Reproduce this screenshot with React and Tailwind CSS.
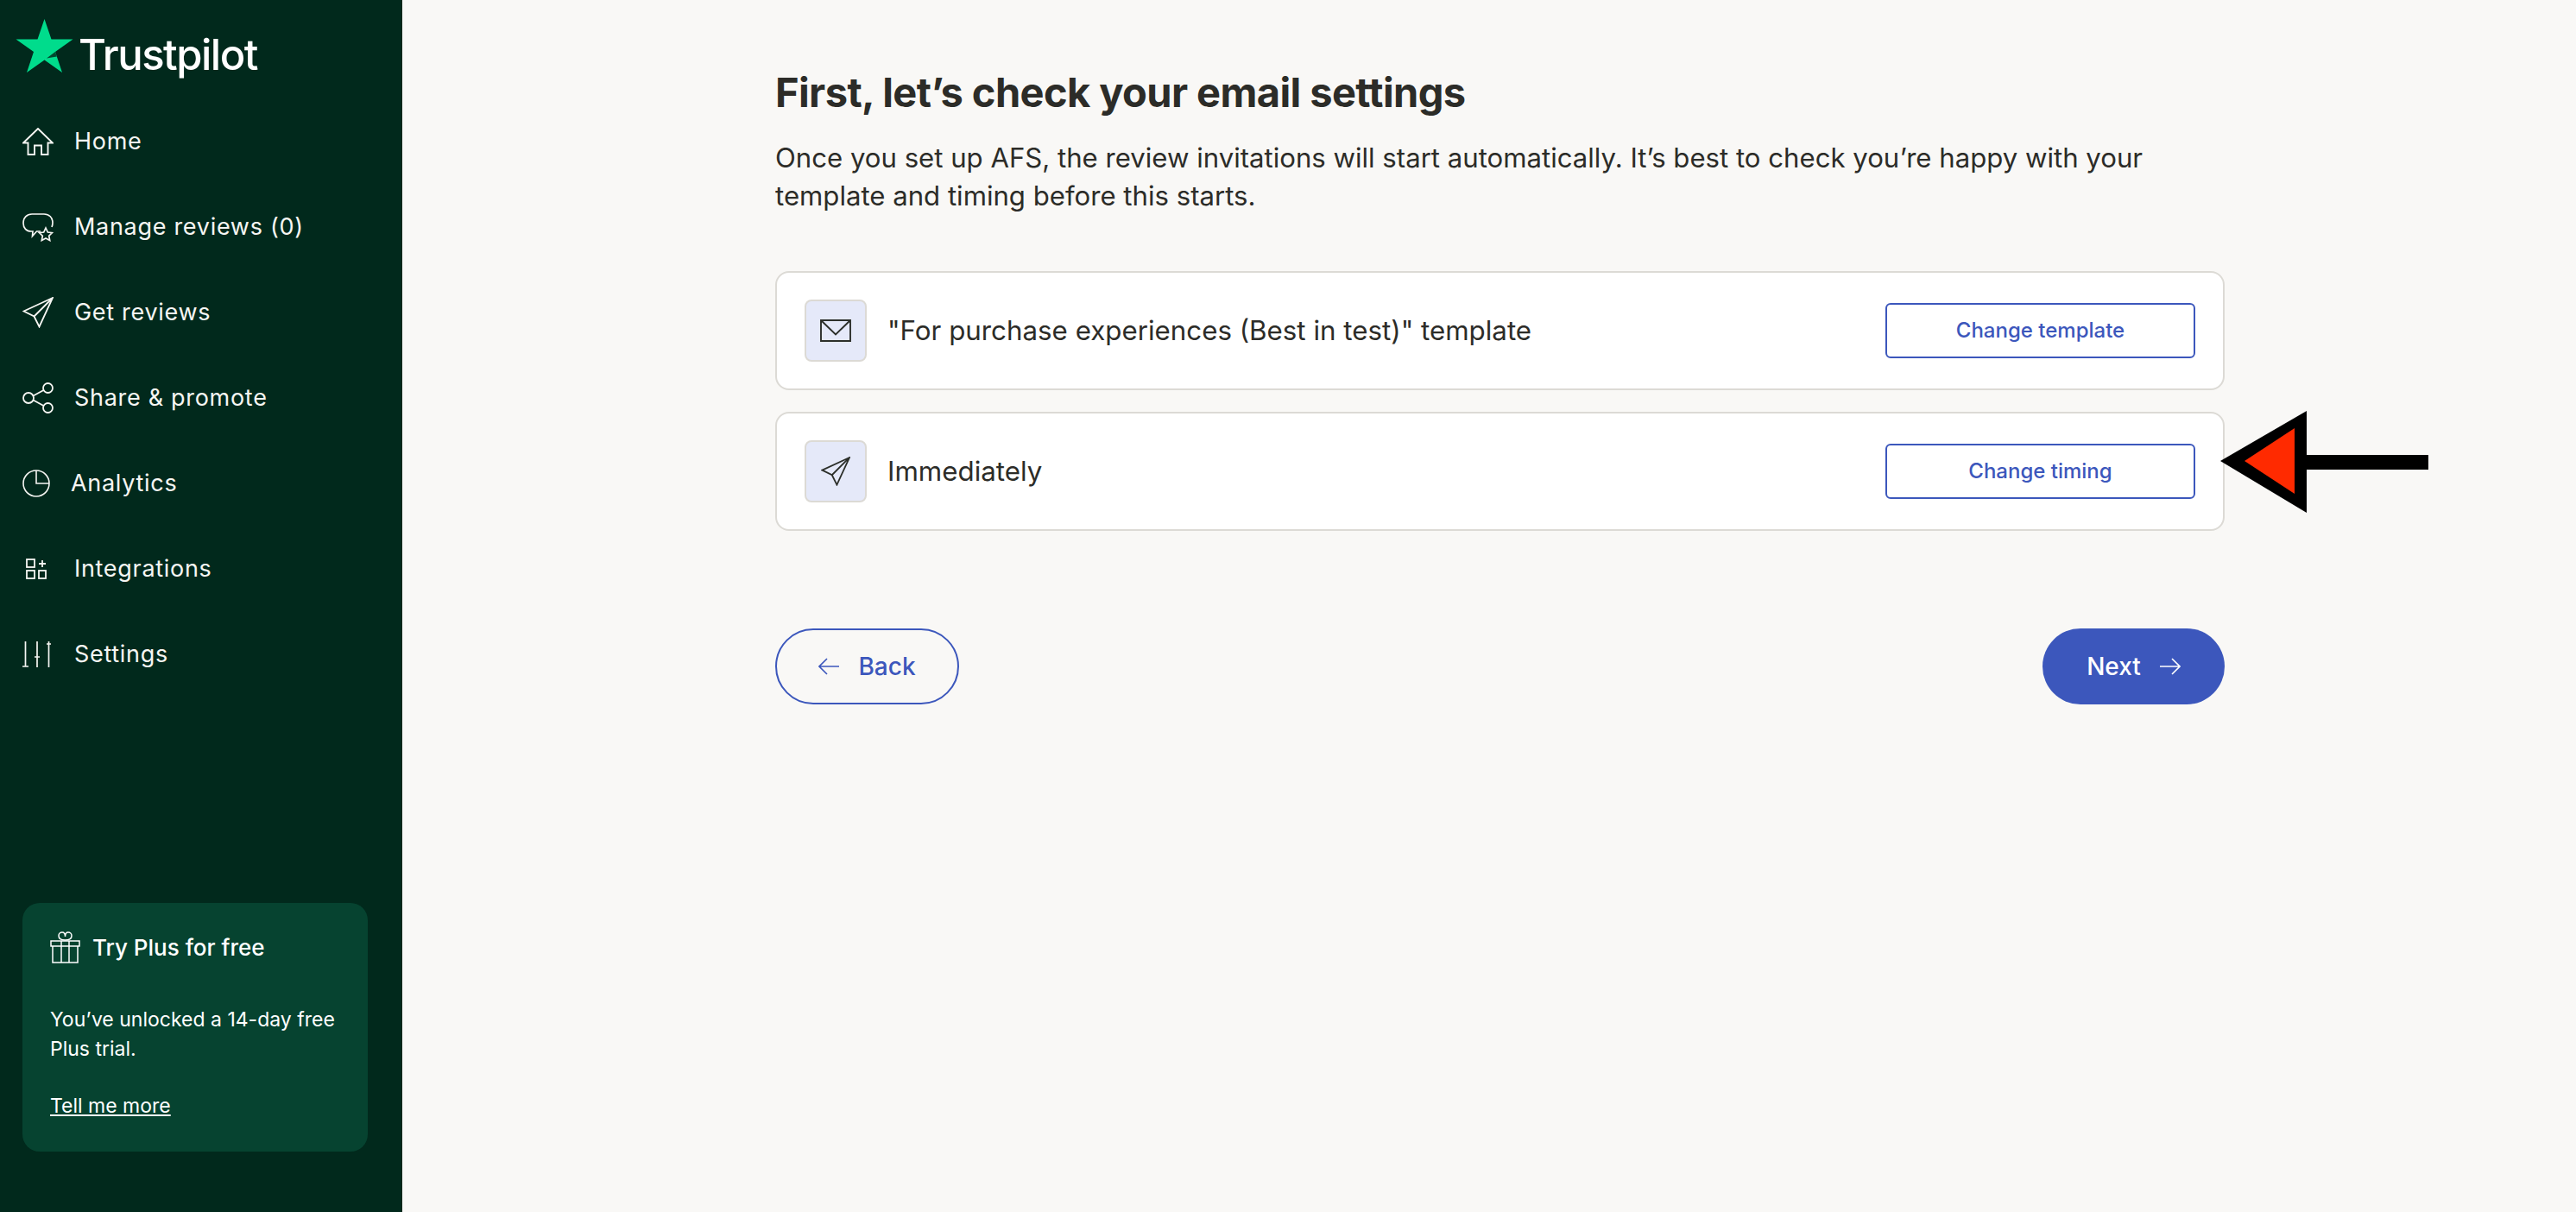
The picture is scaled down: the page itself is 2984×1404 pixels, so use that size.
import React from "react";

const FONT = { fontFamily: "Inter, 'Noto Sans', sans-serif" };

/* ---- Icons ---- */
const Ic = ({ w, h, box, sw = 1.1, children, className = "" }) => (
  <svg
    width={w}
    height={h}
    viewBox={box}
    fill="none"
    stroke="currentColor"
    strokeWidth={sw}
    className={"shrink-0 " + className}
  >
    {children}
  </svg>
);

const HomeIcon = () => (
  <Ic w={36} h={32} box="0 0 36 32" sw={1.9}>
    <path d="M1 17.500 18 1l17 16.500H29.500V31H22V20.500h-8V31H6.500V17.500Z" />
  </Ic>
);

const ReviewsIcon = () => (
  <Ic w={36} h={33} box="0 0 36 33" sw={1.7}>
    <path d="M21 21H16.500l-5 5.500 .5-5.500H10C4.500 21 1 17 1 11.500 1 5 5 1 11 1h14c6 0 10 4 10 10 0 2-.4 3.500-1 5" />
    <path d="m27 17 2.300 5 5.200.6-3.800 3.600 1 5.300-4.700-2.600-4.700 2.600 1-5.300-3.800-3.600 5.200-.6Z" />
  </Ic>
);

const SendIcon = ({ size = 36, sw = 1.8 }) => (
  <Ic w={size} h={size} box="0 0 36 36" sw={sw}>
    <path d="M35 1 1.500 16.500 13.500 22.500 19.500 34.500 35 1ZM35 1 13.500 22.500" />
  </Ic>
);

const ShareIcon = () => (
  <Ic w={36} h={36} box="0 0 36 36" sw={1.8}>
    <circle cx="7" cy="18" r="6" />
    <circle cx="29.500" cy="6.500" r="5.500" />
    <circle cx="29.500" cy="29.500" r="5.500" />
    <path d="m12.500 15.500 12-6.500M12.500 20.500l12 6.500" />
  </Ic>
);

const PieIcon = () => (
  <Ic w={32} h={32} box="0 0 32 32" sw={1.6}>
    <circle cx="16" cy="16" r="15" />
    <path d="M16 1v15h15" />
  </Ic>
);

const GridIcon = () => (
  <Ic w={24} h={24} box="0 0 24 24" sw={1.8}>
    <rect x="1" y="1" width="9" height="9" />
    <rect x="1" y="14" width="9" height="9" />
    <rect x="15" y="14" width="8" height="9" />
    <path d="M19 2v8M15 6h8" />
  </Ic>
);

const SlidersIcon = () => (
  <Ic w={34} h={30} box="0 0 34 30" sw={1.7}>
    <path d="M3.500 0v29M0 29h7M17 0v30M14 18h6M30.500 0v30M28 3h5" />
  </Ic>
);

const GiftIcon = () => (
  <Ic w={35} h={37} box="0 0 35 37" sw={1.5}>
    <path d="M1 11h33v6H1ZM3 17h29v19H3ZM13 11v25M22 11v25" />
    <path d="M17.500 10C14 10 10 9 10 5c0-2.500 2-4 4-4s3.500 2 3.500 5c0-3 1.500-5 3.500-5s4 1.500 4 4c0 4-4 5-7.500 5Z" />
  </Ic>
);

const MailIcon = () => (
  <Ic w={36} h={26} box="0 0 36 26" sw={1.9}>
    <path d="M1 1h34v24H1ZM1 1l17 16.500L35 1" />
  </Ic>
);

const ArrowLeft = () => (
  <Ic w={24} h={20} box="0 0 24 20" sw={1.6}>
    <path d="M24 10H1M10 1 1 10l9 9" />
  </Ic>
);

const ArrowRight = () => (
  <Ic w={24} h={20} box="0 0 24 20" sw={1.6}>
    <path d="M0 10h23M14 1l9 9-9 9" />
  </Ic>
);

const NAV = [
  { label: "Home", icon: <HomeIcon />, gap: "w-[60px]" },
  { label: "Manage reviews (0)", icon: <ReviewsIcon />, gap: "w-[60px]" },
  { label: "Get reviews", icon: <SendIcon />, gap: "w-[60px]" },
  { label: "Share & promote", icon: <ShareIcon />, gap: "w-[60px]" },
  { label: "Analytics", icon: <PieIcon />, gap: "w-[56px]" },
  { label: "Integrations", icon: <GridIcon />, gap: "w-[60px] pl-[4px]" },
  { label: "Settings", icon: <SlidersIcon />, gap: "w-[60px]" },
];

const Sidebar = () => (
  <aside className="flex h-full w-[466px] shrink-0 flex-col bg-[#01291c] text-white">
    {/* Logo */}
    <div className="flex items-start pl-[18px] pt-[22px]">
      <svg width="67" height="62" viewBox="0 0 67 62" className="shrink-0">
        <path fill="#00dc8c" d="M33.500 0 41.500 23.500H66.500L46 38 54 62 33.500 47.500 13 62 21 38 0.500 23.500H25.500Z" />
        <path fill="#01472f" d="M46 38 47.800 43.500 36 45.500Z" />
      </svg>
      <span className="ml-[6px] mt-[17px] text-[49px] leading-[50px] font-medium tracking-[-1.5px]">Trustpilot</span>
    </div>

    {/* Nav */}
    <nav className="mt-[45px] flex flex-col gap-[39px] pl-[26px]">
      {NAV.map((item) => (
        <div key={item.label} className="flex h-[60px] items-center text-[27px] tracking-[0.7px] text-[#f6f6f3]">
          <div className={"flex shrink-0 items-center " + item.gap}>{item.icon}</div>
          <span>{item.label}</span>
        </div>
      ))}
    </nav>

    {/* Promo card */}
    <div className="mt-auto mb-[70px] ml-[26px] h-[288px] w-[400px] rounded-[20px] bg-[#064330] px-[32px] pt-[33px]">
      <div className="flex items-center gap-[14px]">
        <GiftIcon />
        <span className="text-[26px] leading-[36px] font-medium">Try Plus for free</span>
      </div>
      <p className="mt-[48px] text-[23px] leading-[34px]">You’ve unlocked a 14-day free Plus trial.</p>
      <a className="mt-[32px] block w-fit text-[23px] leading-[34px] underline underline-offset-2">Tell me more</a>
    </div>
  </aside>
);

const SettingRow = ({ icon, text, action }) => (
  <div className="flex h-[138px] items-center rounded-[16px] border-2 border-[#dcdad5] bg-white pl-[32px] pr-[32px]">
    <div className="flex h-[72px] w-[72px] shrink-0 items-center justify-center rounded-[8px] border-2 border-[#dcdad5] bg-[#e5e9f9] text-[#2c2f2a]">
      {icon}
    </div>
    <span className="ml-[24px] text-[31.300px] text-[#2c2c28]">{text}</span>
    <button className="ml-auto h-[64px] w-[359px] rounded-[6px] border-2 border-[#3c57bc] text-[24px] font-medium text-[#3c57bc]">
      {action}
    </button>
  </div>
);

export default function App() {
  return (
    <div className="flex h-[1404px] w-[2984px] overflow-hidden bg-[#f9f8f6]" style={FONT}>
      <Sidebar />

      <main className="relative flex-1 pl-[432px] pt-[78px]">
        <div className="w-[1679px]">
          <h1 className="text-[47px] leading-[58px] font-bold tracking-[-0.6px] text-[#2c2c28]">
            First, let’s check your email settings
          </h1>
          <p className="mt-[25px] text-[31.150px] leading-[44px] text-[#2c2c28]">
            Once you set up AFS, the review invitations will start automatically. It’s best to check you’re happy with your template and timing before this starts.
          </p>

          <div className="mt-[65px] flex flex-col gap-[25px]">
            <SettingRow
              icon={<MailIcon />}
              text={'"For purchase experiences (Best in test)" template'}
              action="Change template"
            />
            <SettingRow icon={<SendIcon size={34} sw={1.9} />} text="Immediately" action="Change timing" />
          </div>

          <div className="mt-[113px] flex justify-between">
            <button className="flex h-[88px] w-[213px] items-center justify-center gap-[22px] rounded-full border-2 border-[#3c57bc] text-[28px] font-medium text-[#3c57bc]">
              <ArrowLeft />
              Back
            </button>
            <button className="flex h-[88px] w-[211px] items-center justify-center gap-[22px] rounded-full bg-[#3c57bc] text-[28px] font-medium text-white">
              Next
              <ArrowRight />
            </button>
          </div>
        </div>

        {/* Annotation arrow */}
        <svg width="244" height="118" viewBox="0 0 244 118" className="absolute left-[2104px] top-[476px]">
          <path fill="#000" d="M2 58 102 0V51H243V68H102V118Z" />
          <path fill="#ff2a00" d="M30 58 88 20V96Z" />
        </svg>
      </main>
    </div>
  );
}
